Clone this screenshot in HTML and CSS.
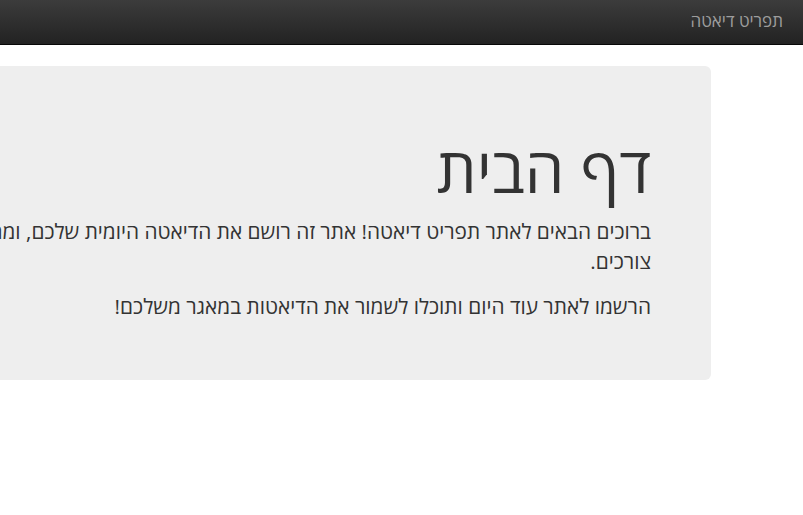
FILE: index.html
```html
<!DOCTYPE html>
<html lang="he" dir="rtl">
<head>
<meta charset="utf-8">
<title>תפריט דיאטה</title>
<link rel="stylesheet" href="styles.css">
</head>
<body>
<nav class="navbar">
  <a class="brand" href="#">תפריט דיאטה</a>
</nav>
<main class="page">
  <section class="jumbotron">
    <h1 class="title">דף הבית</h1>
    <p class="lead">ברוכים הבאים לאתר תפריט דיאטה! אתר זה רושם את הדיאטה היומית שלכם, ומחשב עבורכם את כמות הקלוריות שאתם צורכים.</p>
    <p class="lead">הרשמו לאתר עוד היום ותוכלו לשמור את הדיאטות במאגר משלכם!</p>
  </section>
</main>
</body>
</html>
```
FILE: styles.css
```css
html, body {
  margin: 0;
  padding: 0;
  overflow: hidden;
  background: #fff;
}
body {
  font-family: "Open Sans", "DejaVu Sans", sans-serif;
  color: #333;
  direction: rtl;
}
.navbar {
  height: 44px;
  border-bottom: 1px solid #080808;
  background: linear-gradient(to bottom, #3c3c3c 0, #222 100%);
  display: flex;
  align-items: center;
  padding-right: 20px;
}
.brand {
  color: #9d9d9d;
  text-decoration: none;
  font-size: 17px;
  line-height: 20px;
  margin-top: -3px;
}
.page {
  padding-top: 21px;
  padding-right: 92px;
}
.jumbotron {
  width: 1120px;
  box-sizing: border-box;
  background: #eee;
  border-radius: 6px;
  padding: 48px 60px 48px 60px;
}
.title {
  margin: 20px 0 13px;
  font-size: 63px;
  font-weight: 400;
  line-height: 69px;
}
.lead {
  margin: 0 0 15px;
  font-size: 20.8px;
  line-height: 30px;
}
.lead:last-child {
  margin-bottom: 11px;
}
```
